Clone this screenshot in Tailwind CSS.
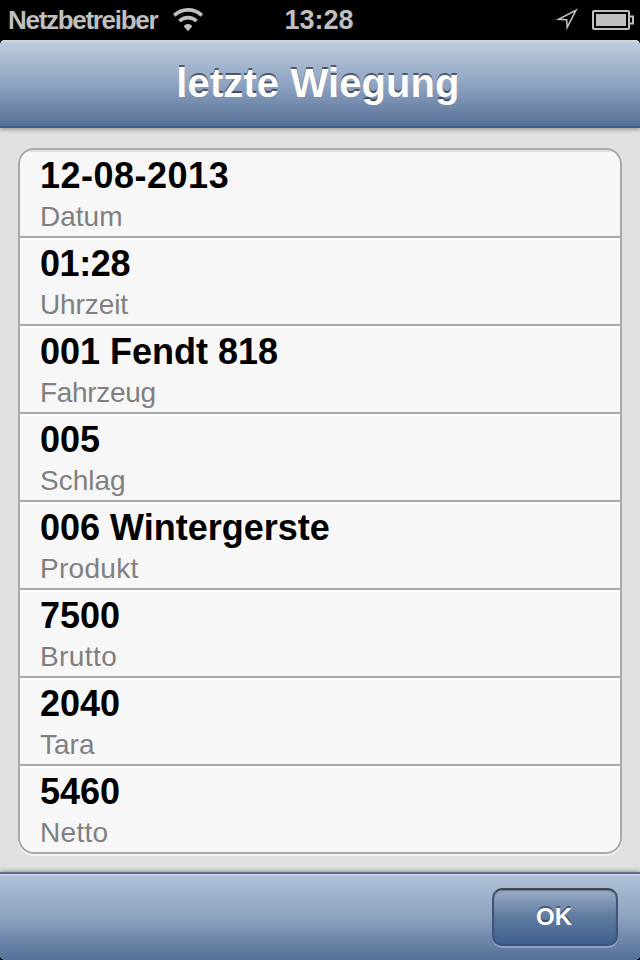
<!DOCTYPE html>
<html lang="de">
<head>
    <meta charset="UTF-8">
    <title>letzte Wiegung</title>
    <script src="https://cdn.jsdelivr.net/npm/@tailwindcss/browser@4"></script>
</head>
<body class="bg-black">
    <div class="flex flex-col w-[640px] h-[960px] overflow-hidden bg-black font-['Liberation_Sans',Arial,sans-serif]">
        <!-- Status bar -->
        <div class="grid grid-cols-[276px_86px_278px] items-center h-10 shrink-0 font-bold text-[#bfbfbf]">
            <div class="flex items-center pl-2">
                <span class="w-[163px] text-[26px] leading-10 tracking-[-1.3px]">Netzbetreiber</span>
                <svg class="w-8 h-6" viewBox="0 0 32 24" fill="none" stroke="#bfbfbf" stroke-width="3.7">
                    <path d="M3.2 7.4A20 20 0 0 1 30.8 7.4"/>
                    <path d="M8.4 13A12.6 12.6 0 0 1 25.6 13"/>
                    <path d="M17 23.2L13 18.8Q13.2 16.2 17 16.1Q20.8 16.2 21 18.8Z" fill="#bfbfbf" stroke="none"/>
                </svg>
            </div>
            <span class="text-center text-[27px] leading-10">13:28</span>
            <div class="flex items-center justify-end pr-1.5 gap-3">
                <svg class="w-6 h-6" viewBox="0 0 24 24" fill="none" stroke="#bfbfbf" stroke-width="1.6">
                    <path d="M20 2.2L2.5 11.3L10.6 11.8L11.2 19.4Z"/>
                </svg>
                <svg class="w-[42px] h-5" viewBox="0 0 42 20" fill="none" stroke="#bfbfbf" stroke-width="2">
                    <rect x="1" y="1" width="36" height="18" rx="1"/>
                    <path d="M38 6.5H41V13.5H38"/>
                    <rect x="4" y="4" width="30" height="12" fill="#bfbfbf" stroke="none"/>
                </svg>
            </div>
        </div>

        <div class="flex flex-col flex-1 rounded-[5px] overflow-hidden bg-[#e0e0e0]">
            <header class="z-10 h-[88px] shrink-0 border-b-2 border-[#3e5d89] bg-linear-to-b from-[#c0cfdf] via-[#90a5c3] to-[#567197] shadow-[inset_0_2px_0_#cbd8e4,0_2px_4px_rgba(0,0,0,0.3)]">
                <h1 class="pt-[3px] pr-1 text-center text-[40px] leading-20 tracking-[0.1px] font-bold text-white [text-shadow:0_-2px_0_rgba(0,0,0,0.5)]">letzte Wiegung</h1>
            </header>

            <main class="flex-1 px-[18px] pt-5">
                <ul class="rounded-[16px] border-2 border-[#a9a9a9] bg-[#f7f7f7] overflow-hidden divide-y-2 divide-[#a9a9a9] shadow-[0_2px_0_#f4f4f4]">
                    <li class="h-[88px] pt-1.5 pl-5 shadow-[inset_0_2px_1px_#dedede]">
                        <p class="text-4xl leading-10 font-bold tracking-[0.5px] text-black">12-08-2013</p>
                        <p class="mt-[5px] text-[28px] leading-8 text-[#808080]">Datum</p>
                    </li>
                    <li class="h-[88px] pt-1.5 pl-5 shadow-[inset_0_2px_0_#fff]">
                        <p class="text-4xl leading-10 font-bold tracking-[-0.4px] text-black">01:28</p>
                        <p class="mt-[5px] text-[28px] leading-8 tracking-[-0.1px] text-[#808080]">Uhrzeit</p>
                    </li>
                    <li class="h-[88px] pt-1.5 pl-5 shadow-[inset_0_2px_0_#fff]">
                        <p class="text-4xl leading-10 font-bold text-black">001 Fendt 818</p>
                        <p class="mt-[5px] text-[28px] leading-8 tracking-[-0.3px] text-[#808080]">Fahrzeug</p>
                    </li>
                    <li class="h-[88px] pt-1.5 pl-5 shadow-[inset_0_2px_0_#fff]">
                        <p class="text-4xl leading-10 font-bold text-black">005</p>
                        <p class="mt-[5px] text-[28px] leading-8 text-[#808080]">Schlag</p>
                    </li>
                    <li class="h-[88px] pt-1.5 pl-5 shadow-[inset_0_2px_0_#fff]">
                        <p class="text-4xl leading-10 font-bold text-black">006 Wintergerste</p>
                        <p class="mt-[5px] text-[28px] leading-8 tracking-[0.3px] text-[#808080]">Produkt</p>
                    </li>
                    <li class="h-[88px] pt-1.5 pl-5 shadow-[inset_0_2px_0_#fff]">
                        <p class="text-4xl leading-10 font-bold text-black">7500</p>
                        <p class="mt-[5px] text-[28px] leading-8 tracking-[0.4px] text-[#808080]">Brutto</p>
                    </li>
                    <li class="h-[88px] pt-1.5 pl-5 shadow-[inset_0_2px_0_#fff]">
                        <p class="text-4xl leading-10 font-bold text-black">2040</p>
                        <p class="mt-[5px] text-[28px] leading-8 text-[#808080]">Tara</p>
                    </li>
                    <li class="h-[86px] pt-1.5 pl-5 shadow-[inset_0_2px_0_#fff]">
                        <p class="text-4xl leading-10 font-bold text-black">5460</p>
                        <p class="mt-[5px] text-[28px] leading-8 tracking-[0.3px] text-[#808080]">Netto</p>
                    </li>
                </ul>
            </main>

            <footer class="flex justify-end h-[88px] shrink-0 pt-3.5 pr-[22px] border-t-2 border-[#5d708e] bg-linear-to-b from-[#b1c1d9] via-[#8ea3bf] to-[#536f98] shadow-[inset_0_2px_0_#c4d0e1,0_-1px_4px_rgba(0,0,0,0.35)]">
                <button class="w-[126px] h-[58px] pr-0.5 rounded-[10px] border-2 border-[#40557a] border-t-[#3b4658] bg-linear-to-b from-[#9aabc5] via-[#5f7ba1] to-[#3f608f] text-2xl font-bold text-white shadow-[0_2px_0_#8ea3c0,inset_0_1px_1px_rgba(0,0,0,0.3)] [text-shadow:0_-2px_0_rgba(0,0,0,0.4)]">OK</button>
            </footer>
        </div>
    </div>
</body>
</html>
